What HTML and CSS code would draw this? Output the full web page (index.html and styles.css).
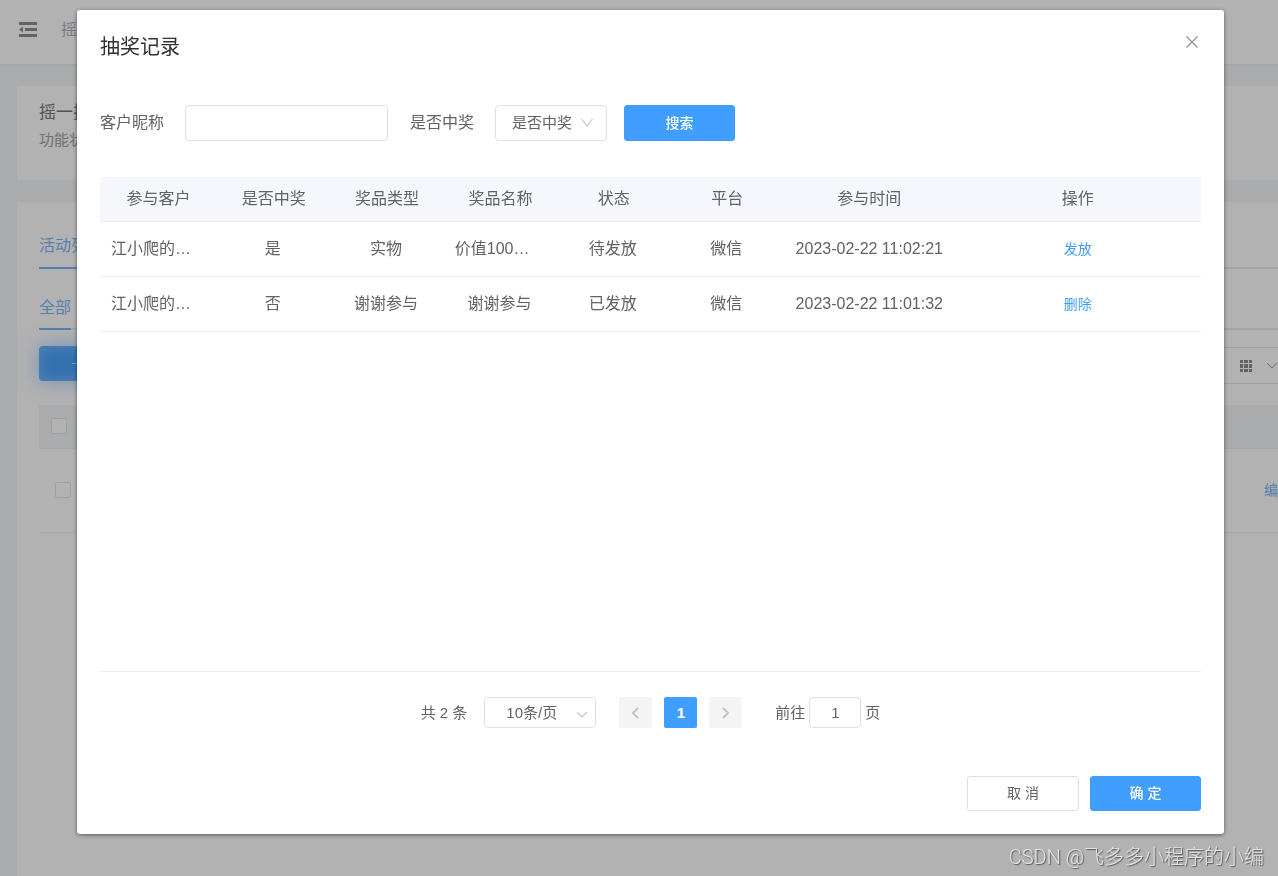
FILE: index.html
```html
<!DOCTYPE html>
<html lang="zh-CN">
<head>
<meta charset="utf-8">
<title>抽奖记录</title>
<link rel="stylesheet" href="styles.css">
</head>
<body>
<div class="app">
  <header class="topbar">
    <svg class="fold-icon" viewBox="0 0 18 15" aria-hidden="true"><path d="M0 0h18v3H0zM6 6h12v3H6zM0 12h18v3H0zM0 7.5l4-3v6z"/></svg>
    <span class="crumb">摇一摇</span>
  </header>
  <main class="page">
    <section class="card intro">
      <h1 class="intro-title">摇一摇</h1>
      <p class="intro-text">功能状态</p>
    </section>
    <section class="card panel">
      <nav class="tabs tabs-main"><a class="tab" href="#list">活动列表</a></nav>
      <nav class="tabs tabs-sub"><a class="tab" href="#all">全部</a></nav>
      <div class="toolbar">
        <button class="add" type="button" aria-label="新增"><svg class="add-icon" viewBox="0 0 12 12"><path d="M0 5.5h12M6 0v12"/></svg></button>
        <div class="tools">
          <svg class="grid-icon" viewBox="0 0 12 12" aria-hidden="true"><path d="M0 0h3v3H0zM4 0h4v3H4zM9 0h3v3H9zM0 4h3v4H0zM4 4h4v4H4zM9 4h3v4H9zM0 9h3v3H0zM4 9h4v3H4zM9 9h3v3H9z"/></svg>
          <svg class="tools-arrow" viewBox="0 0 12 12" aria-hidden="true"><path d="M1 3l5 5 5-5"/></svg>
        </div>
      </div>
      <div class="list-head"><input class="check" type="checkbox" aria-label="全选"></div>
      <div class="list-row"><input class="check" type="checkbox" aria-label="选择"><a class="edit" href="#edit">编</a></div>
    </section>
  </main>
</div>

<div class="overlay">
  <div class="dialog" role="dialog" aria-labelledby="dialog-title">
    <div class="dialog-head">
      <h2 class="dialog-title" id="dialog-title">抽奖记录</h2>
      <button class="close" type="button" aria-label="关闭"><svg class="close-icon" viewBox="0 0 12 12"><path d="M.5.5l11 11M11.5.5l-11 11"/></svg></button>
    </div>
    <form class="filters">
      <label class="field"><span>客户昵称</span><input class="text-box" type="text"></label>
      <label class="field"><span>是否中奖</span>
        <span class="select-wrap"><select class="select"><option>是否中奖</option></select><svg class="select-arrow" viewBox="0 0 12 12" aria-hidden="true"><path d="M.5 2L6 9l5.500-7"/></svg></span>
      </label>
      <button class="btn btn-primary search" type="button">搜索</button>
    </form>
    <div class="table-wrap">
      <table class="records">
        <colgroup><col class="col-user"><col class="col-std"><col class="col-std"><col class="col-std"><col class="col-std"><col class="col-std"><col class="col-time"><col></colgroup>
        <thead><tr><th>参与客户</th><th>是否中奖</th><th>奖品类型</th><th>奖品名称</th><th>状态</th><th>平台</th><th>参与时间</th><th>操作</th></tr></thead>
        <tbody>
          <tr><td class="start">江小爬的…</td><td>是</td><td>实物</td><td class="start">价值100…</td><td>待发放</td><td>微信</td><td>2023-02-22 11:02:21</td><td><a class="action" href="#send">发放</a></td></tr>
          <tr><td class="start">江小爬的…</td><td>否</td><td>谢谢参与</td><td>谢谢参与</td><td>已发放</td><td>微信</td><td>2023-02-22 11:01:32</td><td><a class="action" href="#delete">删除</a></td></tr>
        </tbody>
      </table>
    </div>
    <div class="pager">
      <span>共 2 条</span>
      <span class="select-wrap"><select class="select page-size" aria-label="每页条数"><option>10条/页</option></select><svg class="select-arrow size-arrow" viewBox="0 0 12 12" aria-hidden="true"><path d="M1 3l5 5 5-5"/></svg></span>
      <div class="pages">
        <button class="page-btn" type="button" aria-label="上一页"><svg class="page-icon" viewBox="0 0 12 12"><path d="M8 1L3 6l5 5"/></svg></button>
        <button class="page-btn current" type="button">1</button>
        <button class="page-btn" type="button" aria-label="下一页"><svg class="page-icon" viewBox="0 0 12 12"><path d="M3 1l5 5-5 5"/></svg></button>
      </div>
      <label class="jump">前往<input class="jump-box" type="text" value="1">页</label>
    </div>
    <div class="dialog-foot">
      <button class="btn" type="button">取 消</button>
      <button class="btn btn-primary" type="button">确 定</button>
    </div>
  </div>
</div>
<div class="watermark">CSDN @飞多多小程序的小编</div>
</body>
</html>
```
FILE: styles.css
```css
* { box-sizing: border-box; }
body {
  margin: 0;
  overflow: hidden;
  color: #606266;
  font: 16px/20px "Liberation Sans", "Noto Sans CJK SC", sans-serif;
}
button, input, select { font: inherit; color: inherit; margin: 0; }
h1, h2, p { margin: 0; font-weight: 400; }
a { text-decoration: none; color: #409eff; }
svg { display: block; flex: none; }

/* Page behind the dialog */
.app { min-height: 100vh; display: flex; flex-direction: column; background: #f3f5f8; }
.app a { color: #7ab8f8; }
.topbar {
  display: flex;
  align-items: center;
  gap: 24px;
  height: 64px;
  padding: 0 19px 5px;
  background: #fff;
  box-shadow: 0 1px 3px rgba(0, 21, 41, .06);
}
.fold-icon { width: 18px; height: 15px; fill: #8c8e90; }
.crumb { color: #b0b4b8; }
.page { flex: 1; display: flex; flex-direction: column; gap: 22px; padding: 22px 0 0 17px; }
.card { background: #fff; padding-left: 22px; }
.intro { height: 94px; padding-top: 16px; }
.intro-title { font-size: 17px; line-height: 22px; color: #76787a; }
.intro-text { margin-top: 6px; font-size: 15px; color: #a0a2a4; }
.panel { flex: 1; padding-top: 34px; }
.tabs { display: flex; border-bottom: 2px solid #e9ebf0; }
.tab { border-bottom: 2px solid #7ab8f8; margin-bottom: -2px; }
.tabs-main .tab { height: 33px; }
.tabs-sub { margin-top: 29px; }
.tabs-sub .tab { height: 32px; }
.toolbar { display: flex; justify-content: space-between; margin-top: 16px; }
.add {
  display: flex;
  align-items: center;
  width: 112px;
  height: 35px;
  padding: 0 33px;
  border: 0;
  border-radius: 4px;
  background: #4ca3fc;
  box-shadow: 0 0 20px rgba(64, 158, 255, .5), inset 0 0 14px rgba(200, 225, 255, .4);
}
.add-icon { width: 12px; stroke: #c5def8; fill: none; }
.tools {
  display: flex;
  align-items: center;
  gap: 14px;
  height: 37px;
  margin-top: 1px;
  padding-left: 19px;
  border: solid #e0e2e6;
  border-width: 1px 0 1px 1px;
}
.grid-icon { width: 12px; fill: #8c8e90; }
.tools-arrow { width: 12px; stroke: #a0a2a4; fill: none; }
.list-head {
  display: flex;
  align-items: center;
  height: 44px;
  margin-top: 21px;
  padding: 0 12px 2px;
  background: #f3f5f8;
  border-bottom: 1px solid #ebeef5;
}
.list-row {
  display: flex;
  align-items: center;
  justify-content: space-between;
  height: 84px;
  padding: 0 0 2px 16px;
  border-bottom: 1px solid #ebeef5;
}
.check {
  appearance: none;
  width: 16px;
  height: 16px;
  border: 1px solid #e4e6ea;
  border-radius: 2px;
  background: #fff;
}
.edit { white-space: nowrap; font-size: 14px; }

/* Dialog */
.overlay {
  position: fixed;
  inset: 0;
  display: flex;
  padding: 10px 54px 42px 77px;
  background: rgba(0, 0, 0, .3);
}
.dialog {
  flex: 1;
  display: flex;
  flex-direction: column;
  min-width: 0;
  padding: 23px;
  border-radius: 3px;
  background: #fff;
  box-shadow: 0 1px 4px rgba(0, 0, 0, .5);
}
.dialog-head { display: flex; justify-content: space-between; align-items: flex-start; }
.dialog-title { font-size: 20px; line-height: 28px; color: #303133; }
.close { padding: 3px; border: 0; background: none; }
.close-icon { width: 12px; stroke: #909399; stroke-width: 1.3; fill: none; }
.filters { display: flex; align-items: center; gap: 22px; margin-top: 44px; }
.field { display: flex; align-items: center; gap: 21px; }
.text-box, .select, .jump-box { border: 1px solid #dcdfe6; border-radius: 4px; background: #fff; }
.text-box { width: 203px; height: 36px; padding: 0 14px; }
.select-wrap { position: relative; display: flex; }
.select { appearance: none; width: 112px; height: 36px; padding: 0 16px; font-size: 15px; }
.select-arrow {
  position: absolute;
  top: 12px;
  right: 14px;
  width: 12px;
  stroke: #c0c4cc;
  stroke-width: 1.2;
  fill: none;
  pointer-events: none;
}
.btn {
  width: 112px;
  height: 35px;
  padding: 0 0 2px;
  border: 1px solid #dcdfe6;
  border-radius: 3px;
  background: #fff;
  font-size: 14px;
}
.btn-primary { width: 111px; border-color: #409eff; background: #409eff; color: #fff; font-weight: 500; }
.search { height: 36px; margin-left: -5px; padding: 0; }
.table-wrap { flex: 1; margin-top: 36px; border-bottom: 1px solid #ebeef5; }
.records { width: 100%; border-collapse: separate; border-spacing: 0; table-layout: fixed; }
.col-user { width: 117px; }
.col-std { width: 10.3%; }
.col-time { width: 15.5%; }
.records th, .records td {
  padding: 0 11px;
  border-bottom: 1px solid #ebeef5;
  text-align: center;
  font-weight: 400;
  white-space: nowrap;
}
.records th { height: 45px; background: #f5f7fc; }
.records td { height: 55px; padding-right: 13px; }
.records td:nth-last-child(-n+2) { padding-right: 11px; }
.records .start { text-align: left; }
.action { display: block; font-size: 14px; }
.pager { display: flex; justify-content: center; align-items: center; margin-top: 25px; font-size: 15px; }
.pager .select-wrap { margin: 0 23px 0 17px; }
.page-size { height: 31px; padding: 0 21px; }
.size-arrow { right: 8px; }
.pages { display: flex; gap: 12px; }
.page-btn {
  display: flex;
  align-items: center;
  justify-content: center;
  width: 33px;
  height: 31px;
  padding: 0;
  border: 0;
  border-radius: 2px;
  background: #f4f4f5;
}
.page-btn.current { background: #409eff; color: #fff; font-weight: 700; }
.page-icon { width: 12px; stroke: #c0c4cc; stroke-width: 2; fill: none; }
.jump { display: flex; align-items: center; gap: 4px; margin-left: 33px; }
.jump-box { width: 52px; height: 31px; padding: 0; text-align: center; }
.dialog-foot { display: flex; justify-content: flex-end; gap: 11px; margin-top: 48px; }

.watermark {
  position: fixed;
  right: 14px;
  bottom: 6px;
  font-family: Roboto, "Noto Sans CJK SC", sans-serif;
  font-size: 20px;
  font-weight: 300;
  line-height: 26px;
  color: #e4e4e4;
  text-shadow: 1px 1px 1px #555;
}
```
